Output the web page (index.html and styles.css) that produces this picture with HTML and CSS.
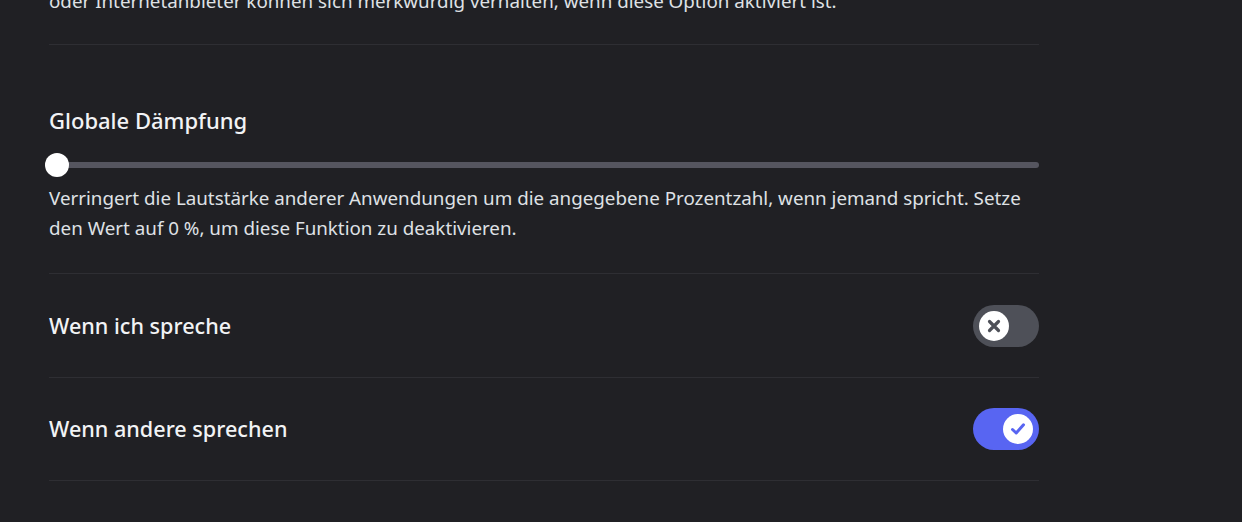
FILE: index.html
```html
<!DOCTYPE html>
<html lang="de">
<head>
<meta charset="utf-8">
<title>Sprachdämpfung</title>
<link rel="stylesheet" href="styles.css">
</head>
<body>
<main class="settings">
  <p class="desc prev">oder Internetanbieter können sich merkwürdig verhalten, wenn diese Option aktiviert ist.</p>
  <div class="divider"></div>

  <section class="section">
    <h2 class="title">Globale Dämpfung</h2>
    <div class="slider">
      <div class="track"></div>
      <div class="knob"></div>
    </div>
    <p class="desc">Verringert die Lautstärke anderer Anwendungen um die angegebene Prozentzahl, wenn jemand spricht. Setze den Wert auf 0 %, um diese Funktion zu deaktivieren.</p>
  </section>

  <div class="row first">
    <span class="label">Wenn ich spreche</span>
    <div class="toggle off">
      <span class="toggle-knob">
        <svg width="16" height="16" viewBox="0 0 16 16"><path d="M3.5 3.5 L12.5 12.5 M12.5 3.5 L3.5 12.5" stroke="#4e5058" stroke-width="3.2" stroke-linecap="round" fill="none"/></svg>
      </span>
    </div>
  </div>

  <div class="row last">
    <span class="label">Wenn andere sprechen</span>
    <div class="toggle on">
      <span class="toggle-knob">
        <svg width="18" height="18" viewBox="0 0 18 18"><path d="M3.5 9.5 L7.2 13 L14.5 4.8" stroke="#5865f2" stroke-width="3" stroke-linecap="round" stroke-linejoin="round" fill="none"/></svg>
      </span>
    </div>
  </div>
</main>
</body>
</html>
```

FILE: styles.css
```css
html, body {
  margin: 0;
  padding: 0;
  background: #202024;
  overflow: hidden;
}

body {
  font-family: "Noto Sans", "Open Sans", sans-serif;
  color: #f2f3f5;
}

.settings {
  width: 990px;
  margin-left: 49px;
  display: flex;
  flex-direction: column;
}

.desc {
  margin: 0;
  max-width: 985px;
  font-size: 18.8px;
  line-height: 30px;
  color: #dfe1e5;
}

.prev {
  margin-top: -14px;
}

.divider {
  height: 1px;
  background: #2e2e33;
  margin-top: 28px;
}

.section {
  display: flex;
  flex-direction: column;
  margin-top: 63px;
  padding-bottom: 30px;
}

.title {
  margin: 0;
  font-size: 22px;
  line-height: 24px;
  font-weight: 500;
  color: #f2f3f5;
}

.slider {
  display: grid;
  align-items: center;
  justify-items: start;
  height: 24px;
  margin-top: 21px;
  margin-bottom: 6px;
}

.track,
.knob {
  grid-area: 1 / 1;
}

.track {
  width: 100%;
  height: 6px;
  border-radius: 3px;
  background: #55555f;
}

.knob {
  width: 24px;
  height: 24px;
  border-radius: 50%;
  background: #ffffff;
  margin-left: -4px;
}

.row {
  display: flex;
  align-items: center;
  justify-content: space-between;
  border-top: 1px solid #2e2e33;
  padding: 30px 0;
}

.row.first {
  padding-top: 31px;
}

.row.last {
  border-bottom: 1px solid #2e2e33;
}

.label {
  font-size: 21.6px;
  line-height: 26px;
  font-weight: 500;
  color: #f2f3f5;
}

.toggle {
  width: 66px;
  height: 42px;
  border-radius: 21px;
  display: flex;
  align-items: center;
  padding: 0 6px;
  box-sizing: border-box;
}

.toggle.off {
  background: #4e5058;
  justify-content: flex-start;
}

.toggle.on {
  background: #5865f2;
  justify-content: flex-end;
}

.toggle-knob {
  width: 30px;
  height: 30px;
  border-radius: 50%;
  background: #ffffff;
  display: flex;
  align-items: center;
  justify-content: center;
}
```
